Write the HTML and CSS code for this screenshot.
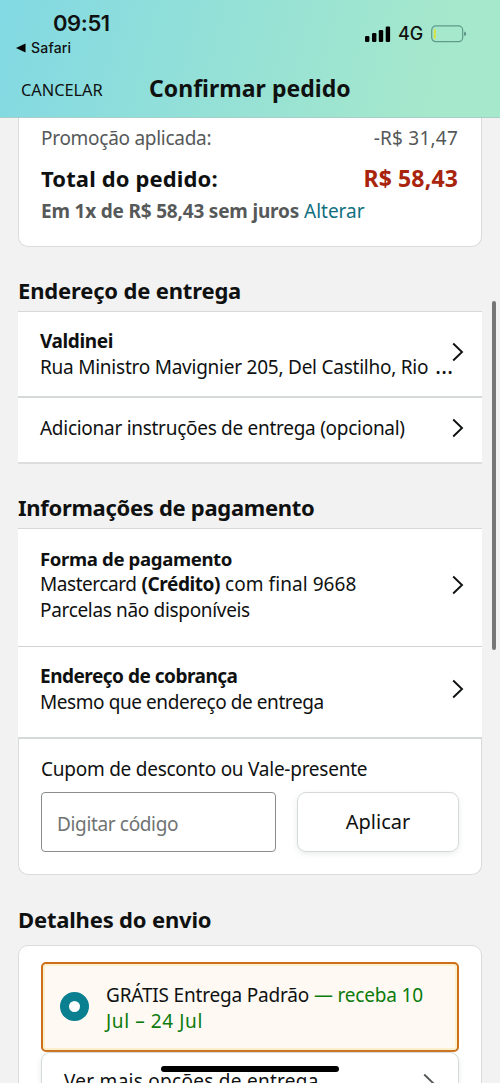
FILE: index.html
```
<!DOCTYPE html>
<html lang="pt-BR">
<head>
<meta charset="utf-8">
<title>Confirmar pedido</title>
<link rel="stylesheet" href="styles.css">
</head>
<body>
<div class="phone">
  <header class="topbar">
    <div class="status">
      <div class="status-left">
        <div class="clock">09:51</div>
        <div class="back-app"><svg width="10" height="10" viewBox="0 0 10 10"><path d="M0 5L9.5 0.5V9.5Z"/></svg><span>Safari</span></div>
      </div>
      <div class="status-right">
        <svg class="signal" width="26" height="16" viewBox="0 0 26 16"><rect x="0" y="10" width="4.4" height="6" rx="1.2"/><rect x="7" y="7" width="4.4" height="9" rx="1.2"/><rect x="13.8" y="4" width="4.4" height="12" rx="1.2"/><rect x="20.7" y="0.5" width="4.4" height="15.5" rx="1.2"/></svg>
        <span class="network">4G</span>
        <svg class="battery" width="36" height="18" viewBox="0 0 36 18"><rect x="0.7" y="0.9" width="31" height="15.8" rx="4.2" fill="none" stroke="#5f9a8a" stroke-width="1.2"/><rect x="2.8" y="4" width="2" height="10" rx="0.8" fill="#d9e23f"/><path d="M33.2 6.5Q35.2 7.2 35.2 8.8T33.2 11.1Z" fill="#568d7d"/></svg>
      </div>
    </div>
    <div class="nav">
      <span class="cancel">CANCELAR</span>
      <span class="title">Confirmar pedido</span>
    </div>
  </header>

  <main class="content">
    <section class="card summary">
      <div class="line promo"><span class="t-promo">Promoção aplicada:</span><span class="t-discount">-R$ 31,47</span></div>
      <div class="line total"><span class="t-total">Total do pedido:</span><span class="price">R$ 58,43</span></div>
      <div class="installments"><b class="t-parcel">Em 1x de R$ 58,43 sem juros</b> <a class="link">Alterar</a></div>
    </section>

    <h2 class="h-address">Endereço de entrega</h2>
    <section class="list address">
      <div class="row row-address">
        <div class="text"><b class="t-name">Valdinei</b><span class="t-street">Rua Ministro Mavignier 205, Del Castilho, Rio <span class="ellipsis">…</span></span></div>
        <svg class="chevron" width="12" height="20" viewBox="0 0 12 20"><path d="M1.2 1.5L10 10L1.2 18.5"/></svg>
      </div>
      <div class="row row-instructions">
        <div class="text"><span class="t-instr">Adicionar instruções de entrega (opcional)</span></div>
        <svg class="chevron" width="12" height="20" viewBox="0 0 12 20"><path d="M1.2 1.5L10 10L1.2 18.5"/></svg>
      </div>
    </section>

    <h2 class="h-payment">Informações de pagamento</h2>
    <section class="list payment">
      <div class="row row-method">
        <div class="text"><b class="t-method">Forma de pagamento</b><span class="t-card"><span class="brand">Mastercard</span> <b>(Crédito)</b> com final 9668</span><span class="t-parts">Parcelas não disponíveis</span></div>
        <svg class="chevron" width="12" height="20" viewBox="0 0 12 20"><path d="M1.2 1.5L10 10L1.2 18.5"/></svg>
      </div>
      <div class="row row-billing">
        <div class="text"><b class="t-billing">Endereço de cobrança</b><span class="t-same">Mesmo que endereço de entrega</span></div>
        <svg class="chevron" width="12" height="20" viewBox="0 0 12 20"><path d="M1.2 1.5L10 10L1.2 18.5"/></svg>
      </div>
      <div class="coupon">
        <div class="coupon-label"><span class="t-coupon">Cupom de desconto ou Vale-presente</span></div>
        <div class="coupon-form">
          <div class="field"><span class="t-code">Digitar código</span></div>
          <div class="apply"><span class="t-apply">Aplicar</span></div>
        </div>
      </div>
    </section>

    <h2 class="h-shipping">Detalhes do envio</h2>
    <section class="card shipping">
      <div class="option">
        <span class="radio"></span>
        <div class="text"><span class="t-free">GRÁTIS Entrega Padrão <i>— receba 10</i></span><span class="t-date"><i>Jul – 24 Jul</i></span></div>
      </div>
      <div class="more">
        <span class="t-more">Ver mais opções de entrega</span>
        <svg class="chevron dim" width="12" height="20" viewBox="0 0 12 20"><path d="M1.2 1.5L10 10L1.2 18.5"/></svg>
      </div>
    </section>
  </main>
  <div class="scrollbar"></div>
  <div class="home-indicator"></div>
</div>
</body>
</html>
```
FILE: styles.css
```
* { box-sizing: border-box; }
body { margin: 0; background: #f2f2f2; }
.phone {
  position: relative;
  width: 500px;
  height: 1083px;
  overflow: hidden;
  background: #f2f2f2;
  color: #0f1111;
  font-family: "Noto Sans", "Open Sans", sans-serif;
  font-size: 19px;
  line-height: 26px;
  white-space: nowrap;
}
i { font-style: normal; color: #0b7b0b; }
svg { display: block; flex: none; }

.topbar {
  height: 118px;
  background: linear-gradient(104deg, #82d9e3 0%, #a6e8cb 88%);
  border-bottom: 1px solid #a6cfc6;
}
.status { display: flex; justify-content: space-between; height: 62px; padding: 9px 33px 0 16px; }
.clock {
  padding-left: 37px;
  font: 600 22px/28px Inter, sans-serif;
  letter-spacing: -0.4px;
}
.back-app { display: flex; align-items: center; gap: 5px; padding-top: 1px; font: 500 14px/20px Inter, sans-serif; letter-spacing: 0.2px; }
.status-right { display: flex; height: 49px; align-items: center; }
.signal { margin-right: 7px; }
.network { width: 33px; padding-top: 1px; font: 500 18px/24px Inter, sans-serif; }
.nav { display: flex; padding-left: 21px; height: 52px; align-items: center; }
.cancel { width: 128px; font-size: 16.4px; letter-spacing: -0.05px; padding-top: 4px; }
.title { font-size: 23px; font-weight: 700; letter-spacing: 0.03px; }

.content { padding: 0 18px; }
.card { background: #fff; border: 1.5px solid #dadcdc; }
.summary { height: 129px; padding: 7px 23px 0 22px; border-top: 0; border-radius: 0 0 10px 10px; }
.line { display: flex; justify-content: space-between; }
.promo { color: #565959; }
.t-promo { letter-spacing: -0.28px; }
.t-discount { letter-spacing: 0.22px; }
.total { margin-top: 13px; font-size: 22px; font-weight: 700; line-height: 28px; }
.t-total { letter-spacing: 0.13px; }
.price { color: #a8240c; font-size: 23px; letter-spacing: 0.15px; }
.installments { margin-top: 6px; color: #565959; }
.t-parcel { letter-spacing: -0.19px; }
.link { color: #0f7080; }

h2 { margin: 0; font-size: 22px; font-weight: 700; line-height: 30px; }
.h-address { padding-top: 28px; height: 64px; letter-spacing: -0.17px; }
.h-payment { padding-top: 28px; height: 64px; letter-spacing: -0.3px; }
.h-shipping { padding-top: 29px; height: 70px; letter-spacing: -0.18px; }

.list { border-top: 1.5px solid #d5d9d9; }
.row { display: flex; align-items: center; justify-content: space-between; padding: 0 18px 0 22px; background: #fff; }
.text { display: flex; flex-direction: column; align-items: flex-start; }
.row .text { width: 0; }
.chevron { fill: none; stroke: #0f1111; stroke-width: 1.9; }
.row-address { height: 86px; border-bottom: 2px solid #d5d9d9; padding-bottom: 5px; }
.row-address .text { padding-top: 4px; }
.row-instructions { height: 66px; border-bottom: 2px solid #dcdede; padding-bottom: 4px; }
.row-method { height: 118px; border-bottom: 1px solid #d0d4d4; padding-bottom: 5px; line-height: 25.6px; }
.row-billing { height: 92px; border-bottom: 2px solid #d5d9d9; padding-bottom: 6px; }
.t-name { letter-spacing: -0.38px; }
.t-street { letter-spacing: -0.24px; }
.ellipsis { font-size: 23px; line-height: 0; padding-left: 2px; }
.t-instr { letter-spacing: -0.28px; }
.t-method { font-size: 18.6px; letter-spacing: -0.37px; margin: -1px 0 1px; }
.brand { letter-spacing: -0.45px; }
.t-card b { letter-spacing: -0.42px; }
.t-card { letter-spacing: 0.06px; }
.t-parts { letter-spacing: -0.33px; }
.t-billing { letter-spacing: -0.5px; }
.t-same { letter-spacing: -0.43px; }

.coupon {
  height: 136px;
  padding: 17px 22px 0;
  background: #fff;
  border: 1.5px solid #dadcdc;
  border-top: 0;
  border-radius: 0 0 10px 10px;
}
.t-coupon { letter-spacing: -0.25px; }
.coupon-form { display: flex; justify-content: space-between; margin-top: 10px; }
.field { width: 235px; height: 60px; padding: 18px 15px 0; border: 1.3px solid #888c8c; border-radius: 4px; color: #6f7373; }
.t-code { letter-spacing: -0.35px; }
.apply {
  width: 162px;
  height: 60px;
  padding-top: 16px;
  border: 1px solid #d5d9d9;
  border-radius: 9px;
  box-shadow: 0 2px 5px rgba(213, 217, 217, 0.5);
  text-align: center;
  font-size: 20px;
}

.shipping { height: 200px; padding: 16px 22px 0; border-radius: 10px; }
.option {
  display: flex;
  align-items: center;
  height: 90px;
  padding-left: 17px;
  gap: 17px;
  border: 2px solid #cc7019;
  border-radius: 5px;
  background: #fef9f2;
  box-shadow: inset 0 0 0 2px #fdf0cf;
}
.option .text { padding-top: 2px; }
.t-free { letter-spacing: -0.18px; }
.t-date { letter-spacing: 0.6px; }
.radio { width: 29px; height: 29px; margin-bottom: 2px; border: 9px solid #0a7f8f; border-radius: 50%; background: #fff; }
.more {
  display: flex;
  justify-content: space-between;
  height: 80px;
  padding: 15px 23px 0 22px;
  border: 1.5px solid #d5d9d9;
  border-radius: 9px;
  box-shadow: 0 2px 5px rgba(213, 217, 217, 0.5);
}
.t-more { letter-spacing: 0.27px; }
.dim { margin-top: 5px; stroke: #565959; }

.scrollbar { position: absolute; right: 4px; top: 301px; width: 4px; height: 349px; border-radius: 2px; background: #777; }
.home-indicator { position: absolute; left: 161px; top: 1066px; width: 178px; height: 6px; border-radius: 3px; background: #000; }
```
